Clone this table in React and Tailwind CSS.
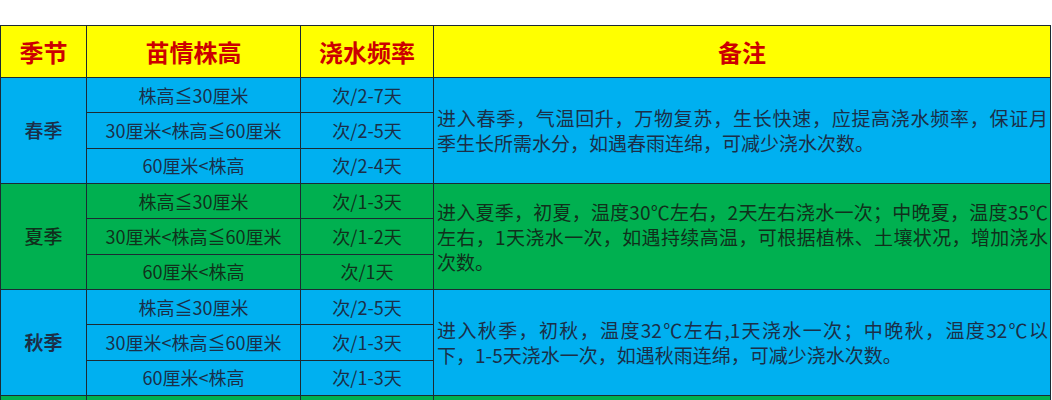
import React from 'react';

const font = { fontFamily: '"Noto Sans CJK SC", "Noto Sans", sans-serif' };

const seasons = [
    {
        name: '春季',
        bg: 'bg-[#00b0f0]',
        text: 'text-[#1b2f48]',
        weight: 'font-medium',
        rates: ['次/2-7天', '次/2-5天', '次/2-4天'],
        notes: [
            '进入春季，气温回升，万物复苏，生长快速，应提高浇水频率，保证月',
            '季生长所需水分，如遇春雨连绵，可减少浇水次数。',
        ],
    },
    {
        name: '夏季',
        bg: 'bg-[#00b050]',
        text: 'text-[#10301c]',
        weight: 'font-medium',
        rates: ['次/1-3天', '次/1-2天', '次/1天'],
        notes: [
            '进入夏季，初夏，温度30℃左右，2天左右浇水一次；中晚夏，温度35℃',
            '左右，1天浇水一次，如遇持续高温，可根据植株、土壤状况，增加浇水',
            '次数。',
        ],
    },
    {
        name: '秋季',
        bg: 'bg-[#00b0f0]',
        text: 'text-[#1b2f48]',
        weight: 'font-bold',
        rates: ['次/2-5天', '次/1-3天', '次/1-3天'],
        notes: [
            '进入秋季，初秋，温度32℃左右,1天浇水一次；中晚秋，温度32℃以',
            '下，1-5天浇水一次，如遇秋雨连绵，可减少浇水次数。',
        ],
    },
];

const heights = ['株高≦30厘米', '30厘米<株高≦60厘米', '60厘米<株高'];

export default function App() {
    return (
        <div className="h-[400px] w-[1052px] overflow-hidden bg-white pt-[25px]" style={font}>
            <div className="grid w-[1051px] grid-cols-[85px_213px_132px_616px] grid-rows-[51px_repeat(9,34.33px)_40px] gap-px bg-[#1c2a33] p-px">
                {/* 表头 */}
                {['季节', '苗情株高', '浇水频率', '备注'].map((h) => (
                    <div
                        key={h}
                        className="flex items-center justify-center bg-[#ffff00] text-[24px] font-bold text-[#cc0000]"
                    >
                        {h}
                    </div>
                ))}

                {seasons.map((s) => (
                    <React.Fragment key={s.name}>
                        <div
                            className={`row-span-3 flex items-center justify-center text-[19px] ${s.bg} ${s.text} ${s.weight}`}
                        >
                            {s.name}
                        </div>
                        {heights.map((h, i) => (
                            <React.Fragment key={h}>
                                <div
                                    className={`col-start-2 flex items-center justify-center text-[18px] ${s.bg} ${s.text}`}
                                >
                                    {h}
                                </div>
                                <div
                                    className={`col-start-3 flex items-center justify-center text-[18px] ${s.bg} ${s.text}`}
                                >
                                    {s.rates[i]}
                                </div>
                                {i === 0 && (
                                    <div
                                        className={`col-start-4 row-span-3 flex flex-col justify-center pl-[3px] pr-[2px] text-[19px] leading-[25px] ${s.bg} ${s.text}`}
                                    >
                                        {s.notes.map((line, k) => (
                                            <div
                                                key={k}
                                                className={`whitespace-nowrap ${
                                                    k < s.notes.length - 1 ? 'text-justify [text-align-last:justify]' : ''
                                                }`}
                                            >
                                                {line}
                                            </div>
                                        ))}
                                    </div>
                                )}
                            </React.Fragment>
                        ))}
                    </React.Fragment>
                ))}

                {/* 下一行（被截断） */}
                <div className="bg-[#00b050]" />
                <div className="bg-[#00b050]" />
                <div className="bg-[#00b050]" />
                <div className="bg-[#00b050]" />
            </div>
        </div>
    );
}
